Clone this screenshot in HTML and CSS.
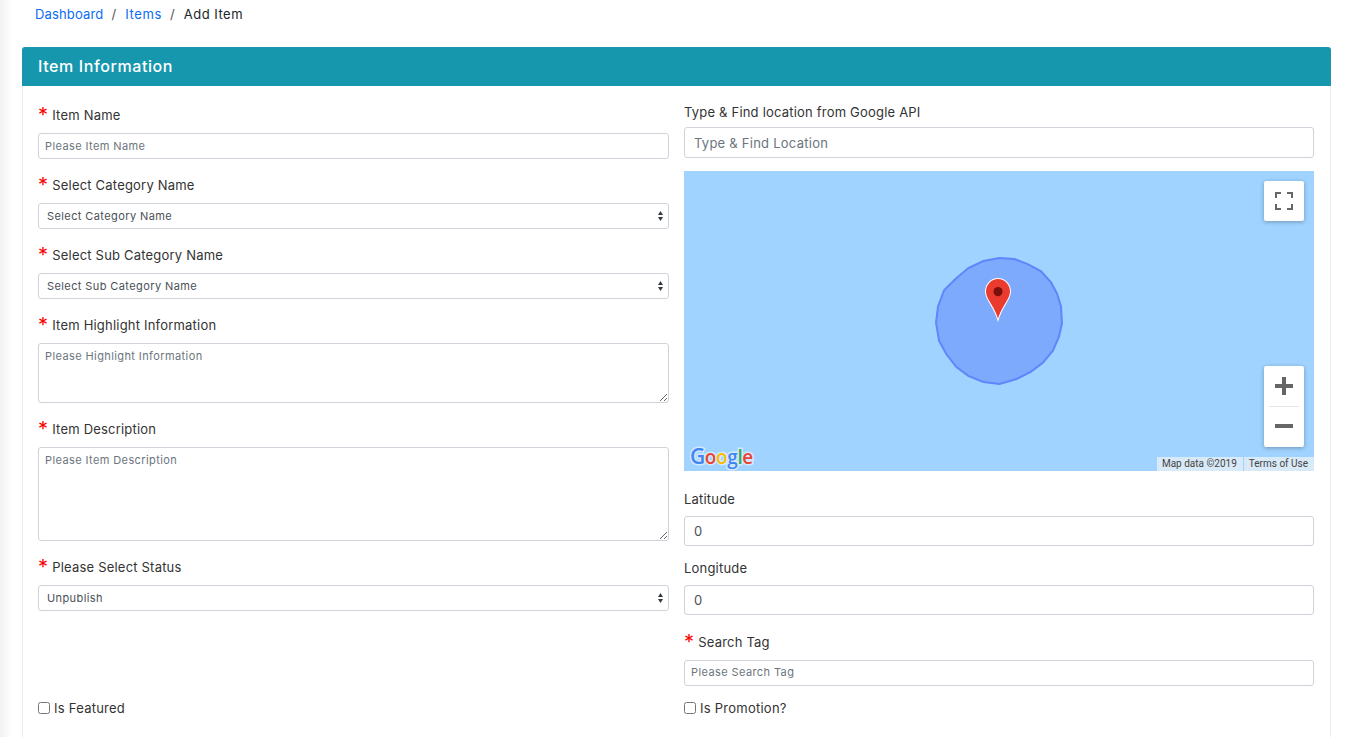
FILE: index.html
```html
<!DOCTYPE html>
<html>
<head>
<meta charset="utf-8">
<title>Add Item</title>
<link rel="stylesheet" href="styles.css">
</head>
<body>
<div class="content">
	<ol class="crumbs">
		<li><a href="#/">Dashboard</a></li>
		<li class="sep">/</li>
		<li><a class="wide" href="#/">Items</a></li>
		<li class="sep">/</li>
		<li class="now">Add Item</li>
	</ol>

	<div class="card">
		<div class="card-head">Item Information</div>
		<div class="card-body">
			<div class="col col-left">
				<div class="group">
					<label class="req">Item Name</label>
					<input class="field" type="text" placeholder="Please Item Name">
				</div>
				<div class="group">
					<label class="req">Select Category Name</label>
					<select class="field pick"><option>Select Category Name</option></select>
				</div>
				<div class="group">
					<label class="req">Select Sub Category Name</label>
					<select class="field pick"><option>Select Sub Category Name</option></select>
				</div>
				<div class="group">
					<label class="req">Item Highlight Information</label>
					<textarea class="field area-s" placeholder="Please Highlight Information"></textarea>
				</div>
				<div class="group">
					<label class="req">Item Description</label>
					<textarea class="field area-l" placeholder="Please Item Description"></textarea>
				</div>
				<div class="group">
					<label class="req">Please Select Status</label>
					<select class="field pick"><option>Unpublish</option></select>
				</div>
			</div>

			<div class="col col-right">
				<div class="group find">
					<label>Type &amp; Find location from Google API</label>
					<input class="field big" type="text" placeholder="Type &amp; Find Location">
				</div>

				<div class="map">
					<svg class="zone" width="131" height="131" viewBox="0 0 130 130">
						<polygon points="65,2 80,3 93,8 106,15 116,26 122,37 126,50 127,67 124,80 118,94 108,106 96,115 82,122 65,127 49,125 34,119 22,110 12,97 5,84 2,66 4,50 10,34 21,23 34,12 49,5" fill="#7eaafe" stroke="#6086fb" stroke-width="2"/>
					</svg>
					<svg class="pin" width="28" height="45" viewBox="0 0 28 43" preserveAspectRatio="none">
						<path d="M14 1.500C7 1.500 1.500 7 1.500 14C1.500 22 10.500 28 14 41.500C17.500 28 26.500 22 26.500 14C26.500 7 21 1.500 14 1.500Z" fill="#ea3b2e" stroke="#fff" stroke-width="1"/>
						<circle cx="14" cy="14" r="4.500" fill="#7a0f0b"/>
					</svg>

					<button class="map-btn full" type="button">
						<svg width="18" height="18" viewBox="0 0 18 18">
							<path d="M0 6V0H6V2H2V6ZM12 0H18V6H16V2H12ZM0 12H2V16H6V18H0ZM16 12H18V18H12V16H16Z" fill="#666"/>
						</svg>
					</button>
					<div class="map-btn zoom">
						<svg width="18" height="18" viewBox="0 0 18 18"><path d="M7 0H11V7H18V11H11V18H7V11H0V7H7Z" fill="#666"/></svg>
						<i></i>
						<svg width="18" height="18" viewBox="0 0 18 18"><path d="M0 7H18V11H0Z" fill="#666"/></svg>
					</div>

					<div class="gg"><b class="c1 cap">G</b><b class="c2">o</b><b class="c3">o</b><b class="c1">g</b><b class="c4">l</b><b class="c2">e</b></div>
					<div class="attr"><span>Map data ©2019</span><span>Terms of Use</span></div>
				</div>

				<div class="group lat">
					<label>Latitude</label>
					<input class="field big slim" type="text" value="0">
				</div>
				<div class="group lng">
					<label>Longitude</label>
					<input class="field big slim" type="text" value="0">
				</div>
				<div class="group tag">
					<label class="req">Search Tag</label>
					<input class="field" type="text" placeholder="Please Search Tag">
				</div>
			</div>

			<label class="check"><input type="checkbox"> Is Featured</label>
			<label class="check"><input type="checkbox"> Is Promotion?</label>
		</div>
	</div>
</div>
</body>
</html>
```

FILE: styles.css
```css
* { box-sizing: border-box; }
html, body { height: 100%; margin: 0; overflow: hidden; }
body { background: #fff; color: #212529; font-family: "Inter", "Noto Sans", sans-serif; font-size: 13px; }

.content { min-height: 100%; padding: 0 15px 0 22px; background: linear-gradient(to right, #f1f1f1, #fafafa 8px, #fff 11px); }

.crumbs { display: flex; height: 47px; margin: 0; padding: 5px 0 0 13px; list-style: none; line-height: 19px; letter-spacing: .15px; }
.crumbs a { color: #0a6cf5; text-decoration: none; }
.crumbs .wide { letter-spacing: .6px; }
.crumbs .sep { margin: 0 9px 0 8px; color: #555; }
.crumbs .now { letter-spacing: .5px; }

.card { border-radius: 3px; background: #fff; }
.card-head { height: 39px; padding: 0 16px; border-radius: 3px 3px 0 0; background: #1797ae; color: #fff; font-size: 16px; font-weight: 500; letter-spacing: .6px; line-height: 39px; }
.card-body { display: grid; grid-template-columns: 631px 630px; column-gap: 15px; padding: 17px 16px 60px 15px; border: 1px solid #e9ecef; border-top: 0; }

.col-left { padding-top: 3px; }
.group { margin-bottom: 17px; }
.group label { display: block; height: 18px; margin-bottom: 9px; color: #333; line-height: 18px; letter-spacing: .2px; }
.req::before { content: "*"; margin-right: 4px; color: #f00; font-size: 20px; line-height: 14px; vertical-align: -2px; }

.field { display: block; width: 100%; height: 26px; padding: 0 6px; border: 1px solid #ced4da; border-radius: 3px; background: #fff; color: #495057; font-family: inherit; font-size: 11px; letter-spacing: .4px; outline: none; }
.field::placeholder { color: #6c757d; opacity: 1; }
.pick { padding-left: 8px; appearance: none; -webkit-appearance: none; background-image: url("data:image/svg+xml,%3Csvg xmlns='http://www.w3.org/2000/svg' width='5' height='10'%3E%3Cpath d='M2.500 0L5 4H0ZM2.500 10L0 6H5Z' fill='%23343a40'/%3E%3C/svg%3E"); background-repeat: no-repeat; background-position: right 5px center; }
.area-s, .area-l { padding-top: 5px; resize: vertical; }
.area-s { height: 60px; }
.area-l { height: 94px; }
.big { height: 31px; padding: 0 9px; font-size: 13px; letter-spacing: .25px; }
.slim { height: 30px; }

.find label { margin-bottom: 6px; }
.find { margin-bottom: 13px; }
.lat { margin: 19px 0 13px; }
.group.lat label { margin-bottom: 8px; }
.group.lng label { margin-bottom: 8px; }
.lng { margin-bottom: 18px; }
.tag { margin-bottom: 13px; }
.tag .field { padding-bottom: 2px; }

.map { position: relative; height: 300px; overflow: hidden; background: #a0d3ff; }
.zone { position: absolute; left: 250px; top: 85px; }
.pin { position: absolute; left: 300px; top: 106px; }
.map-btn { position: absolute; right: 10px; border: 0; border-radius: 2px; background: #fff; box-shadow: 0 1px 4px rgba(0,0,0,.3); }
.full { top: 10px; display: flex; align-items: center; justify-content: center; width: 40px; height: 40px; padding: 0; }
.zoom { top: 195px; display: flex; flex-direction: column; align-items: center; width: 40px; height: 81px; padding-top: 11px; }
.zoom i { width: 30px; height: 1px; margin: 11px 0 10px; background: #e6e6e6; }
.gg { position: absolute; left: 6px; bottom: 2px; font-family: "Open Sans", sans-serif; font-size: 19px; letter-spacing: -.4px; line-height: 24px; -webkit-text-stroke: 3px #d3e9fb; }
.gg b { font-weight: 600; paint-order: stroke; }
.gg .cap { font-size: 21px; }
.c1 { color: #4285f4; }
.c2 { color: #ea4335; }
.c3 { color: #fbbc05; }
.c4 { color: #34a853; }
.attr { position: absolute; right: 0; bottom: 0; display: flex; gap: 1px; height: 14px; font-family: "Roboto", sans-serif; font-size: 10px; line-height: 14px; color: #444; }
.attr span { padding: 0 6px 0 5px; background: #d8e9f7; }

.check { display: flex; align-items: center; gap: 4px; height: 18px; line-height: 18px; letter-spacing: .25px; color: #333; }
.check input { width: 12px; height: 12px; margin: 0; }
```
